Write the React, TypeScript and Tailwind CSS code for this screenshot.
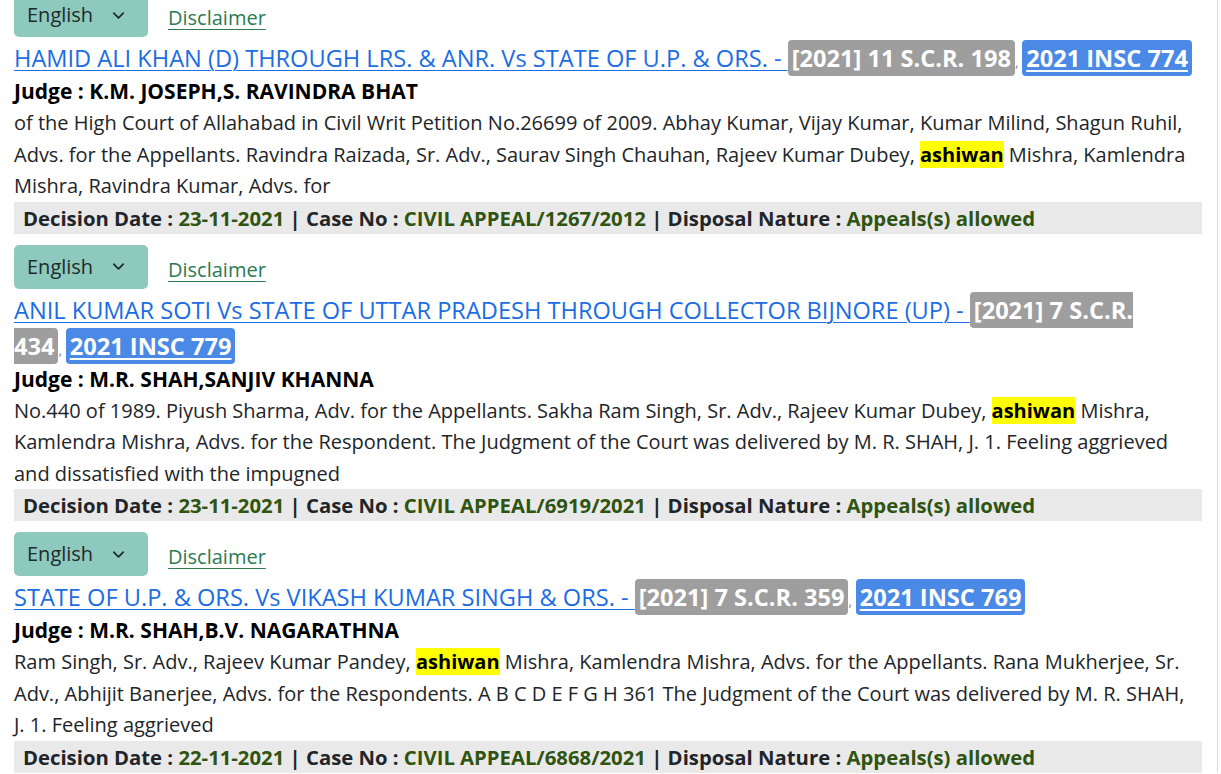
import { ChevronDown } from "lucide-react";

type Case = {
  title: string;
  scr: string;
  insc: string;
  judge: string;
  before: string;
  after: string;
  date: string;
  caseNo: string;
};

const cases: Case[] = [
  {
    title: "HAMID ALI KHAN (D) THROUGH LRS. & ANR. Vs STATE OF U.P. & ORS. - ",
    scr: "[2021] 11 S.C.R. 198",
    insc: "2021 INSC 774",
    judge: "K.M. JOSEPH,S. RAVINDRA BHAT",
    before:
      "of the High Court of Allahabad in Civil Writ Petition No.26699 of 2009. Abhay Kumar, Vijay Kumar, Kumar Milind, Shagun Ruhil, Advs. for the Appellants. Ravindra Raizada, Sr. Adv., Saurav Singh Chauhan, Rajeev Kumar Dubey, ",
    after: " Mishra, Kamlendra Mishra, Ravindra Kumar, Advs. for",
    date: "23-11-2021",
    caseNo: "CIVIL APPEAL/1267/2012",
  },
  {
    title: "ANIL KUMAR SOTI Vs STATE OF UTTAR PRADESH THROUGH COLLECTOR BIJNORE (UP) - ",
    scr: "[2021] 7 S.C.R. 434",
    insc: "2021 INSC 779",
    judge: "M.R. SHAH,SANJIV KHANNA",
    before:
      "No.440 of 1989. Piyush Sharma, Adv. for the Appellants. Sakha Ram Singh, Sr. Adv., Rajeev Kumar Dubey, ",
    after:
      " Mishra, Kamlendra Mishra, Advs. for the Respondent. The Judgment of the Court was delivered by M. R. SHAH, J. 1. Feeling aggrieved and dissatisfied with the impugned",
    date: "23-11-2021",
    caseNo: "CIVIL APPEAL/6919/2021",
  },
  {
    title: "STATE OF U.P. & ORS. Vs VIKASH KUMAR SINGH & ORS. - ",
    scr: "[2021] 7 S.C.R. 359",
    insc: "2021 INSC 769",
    judge: "M.R. SHAH,B.V. NAGARATHNA",
    before: "Ram Singh, Sr. Adv., Rajeev Kumar Pandey, ",
    after:
      " Mishra, Kamlendra Mishra, Advs. for the Appellants. Rana Mukherjee, Sr. Adv., Abhijit Banerjee, Advs. for the Respondents. A B C D E F G H 361 The Judgment of the Court was delivered by M. R. SHAH, J. 1. Feeling aggrieved",
    date: "22-11-2021",
    caseNo: "CIVIL APPEAL/6868/2021",
  },
];

function Entry({ c }: { c: Case }) {
  return (
    <div className="mb-[11px]">
      <div className="flex items-center gap-[20px]">
        <div className="flex h-[44px] w-[134px] items-center justify-between rounded-[5px] bg-[#8dc9bd] pl-[13px] pr-[20px] text-[20px] text-[#1f2a2a]">
          <span>English</span>
          <ChevronDown size={19} strokeWidth={2.25} />
        </div>
        <a className="mt-[6px] text-[20px] text-[#2b7a52] underline decoration-1 underline-offset-[4px]">
          Disclaimer
        </a>
      </div>
      <p className="mt-[3px] text-[23.6px] leading-[36px]">
        <a className="text-[#1b6de3] underline decoration-1 underline-offset-[3px]">
          {c.title}
        </a>
        <span className="rounded-[4px] bg-[#9e9e9e] px-[4px] py-[2px] font-bold text-white">
          {c.scr}
        </span>
        <span className="text-[14px] leading-[0] text-[#8a8a8a]">,{"\u00a0"}</span>
        <span className="rounded-[4px] bg-[#4a89e6] px-[4px] py-[2px] font-bold text-white underline decoration-2 underline-offset-[3px]">
          {c.insc}
        </span>
      </p>
      <p className="text-[21px] font-bold leading-[30px] text-black">
        Judge : {c.judge}
      </p>
      <p className="mt-[1px] pr-[6px] text-[20px] leading-[31.5px] text-[#212529]">
        {c.before}
        <span className="bg-[#ffff00] font-bold text-black">ashiwan</span>
        {c.after}
      </p>
      <div className="mr-[2px] bg-[#e9e9e9] pl-[9px] text-[20.3px] font-bold leading-[32px] text-[#212529]">
        Decision Date : <span className="text-[#2f5310]">{c.date}</span> | Case No :{" "}
        <span className="text-[#2f5310]">{c.caseNo}</span> | Disposal Nature :{" "}
        <span className="text-[#2f5310]">Appeals(s) allowed</span>
      </div>
    </div>
  );
}

export default function App() {
  return (
    <div className="h-[774px] overflow-hidden bg-white font-['Open_Sans',sans-serif]">
      <div className="-mt-[7px] w-[1218px] border-r border-[#dcdcdc] pl-[14px] pr-[13px]">
        {cases.map((c) => (
          <Entry key={c.insc} c={c} />
        ))}
      </div>
    </div>
  );
}
